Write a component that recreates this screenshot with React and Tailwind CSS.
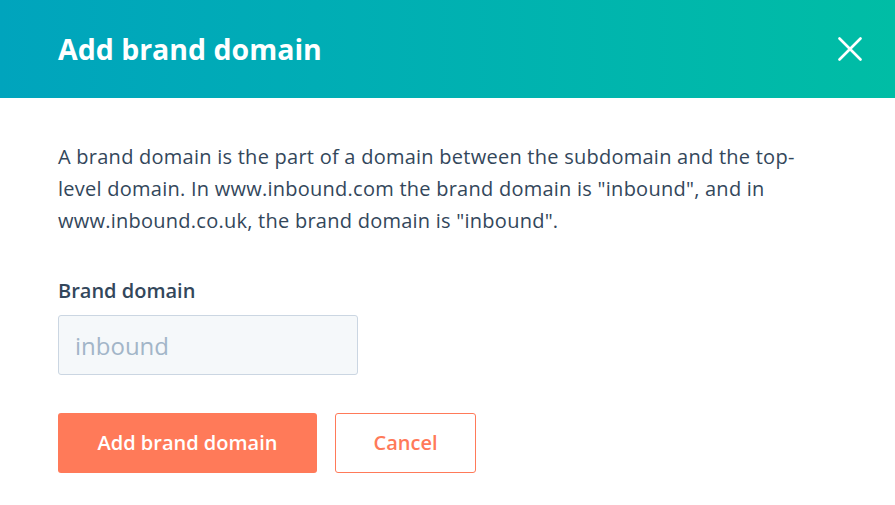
export default function App() {
  return (
    <div className="w-[895px] h-[505px] bg-white overflow-hidden font-['Open_Sans',sans-serif]">
      {/* Header */}
      <div className="h-[98px] flex items-center justify-between pl-[58px] pr-[33px] bg-gradient-to-r from-[#00a4bd] to-[#00bda5]">
        <h1 className="text-[28.5px] font-bold text-white leading-none">Add brand domain</h1>
        <svg width="24" height="24" viewBox="0 0 24 24" fill="none" stroke="white" strokeWidth="2.6" strokeLinecap="round">
          <path d="M1.5 1.5L22.5 22.5M22.5 1.5L1.5 22.5" />
        </svg>
      </div>

      {/* Body */}
      <div className="pl-[58px] pt-[43px]">
        <p className="w-[760px] text-[20px] leading-[32px] tracking-[0.25px] text-[#33475b]">
          A brand domain is the part of a domain between the subdomain and the top-level domain. In www.inbound.com the brand domain is "inbound", and in www.inbound.co.uk, the brand domain is "inbound".
        </p>

        <label className="block mt-[42px] text-[20px] font-semibold text-[#33475b] leading-[24px]">
          Brand domain
        </label>
        <input
          type="text"
          placeholder="inbound"
          className="block mt-[12px] w-[300px] h-[60px] px-[16px] bg-[#f5f8fa] border border-[#cbd6e2] rounded-[3px] text-[24px] text-[#33475b] placeholder:text-[#a2b5c8] outline-none"
        />

        <div className="flex gap-[18px] mt-[38px]">
          <button className="w-[259px] h-[60px] rounded-[3px] bg-[#ff7a59] text-white text-[20px] font-semibold">
            Add brand domain
          </button>
          <button className="w-[141px] h-[60px] rounded-[3px] bg-white border border-[#ff7a59] text-[#ff7a59] text-[20px] font-semibold">
            Cancel
          </button>
        </div>
      </div>
    </div>
  );
}
